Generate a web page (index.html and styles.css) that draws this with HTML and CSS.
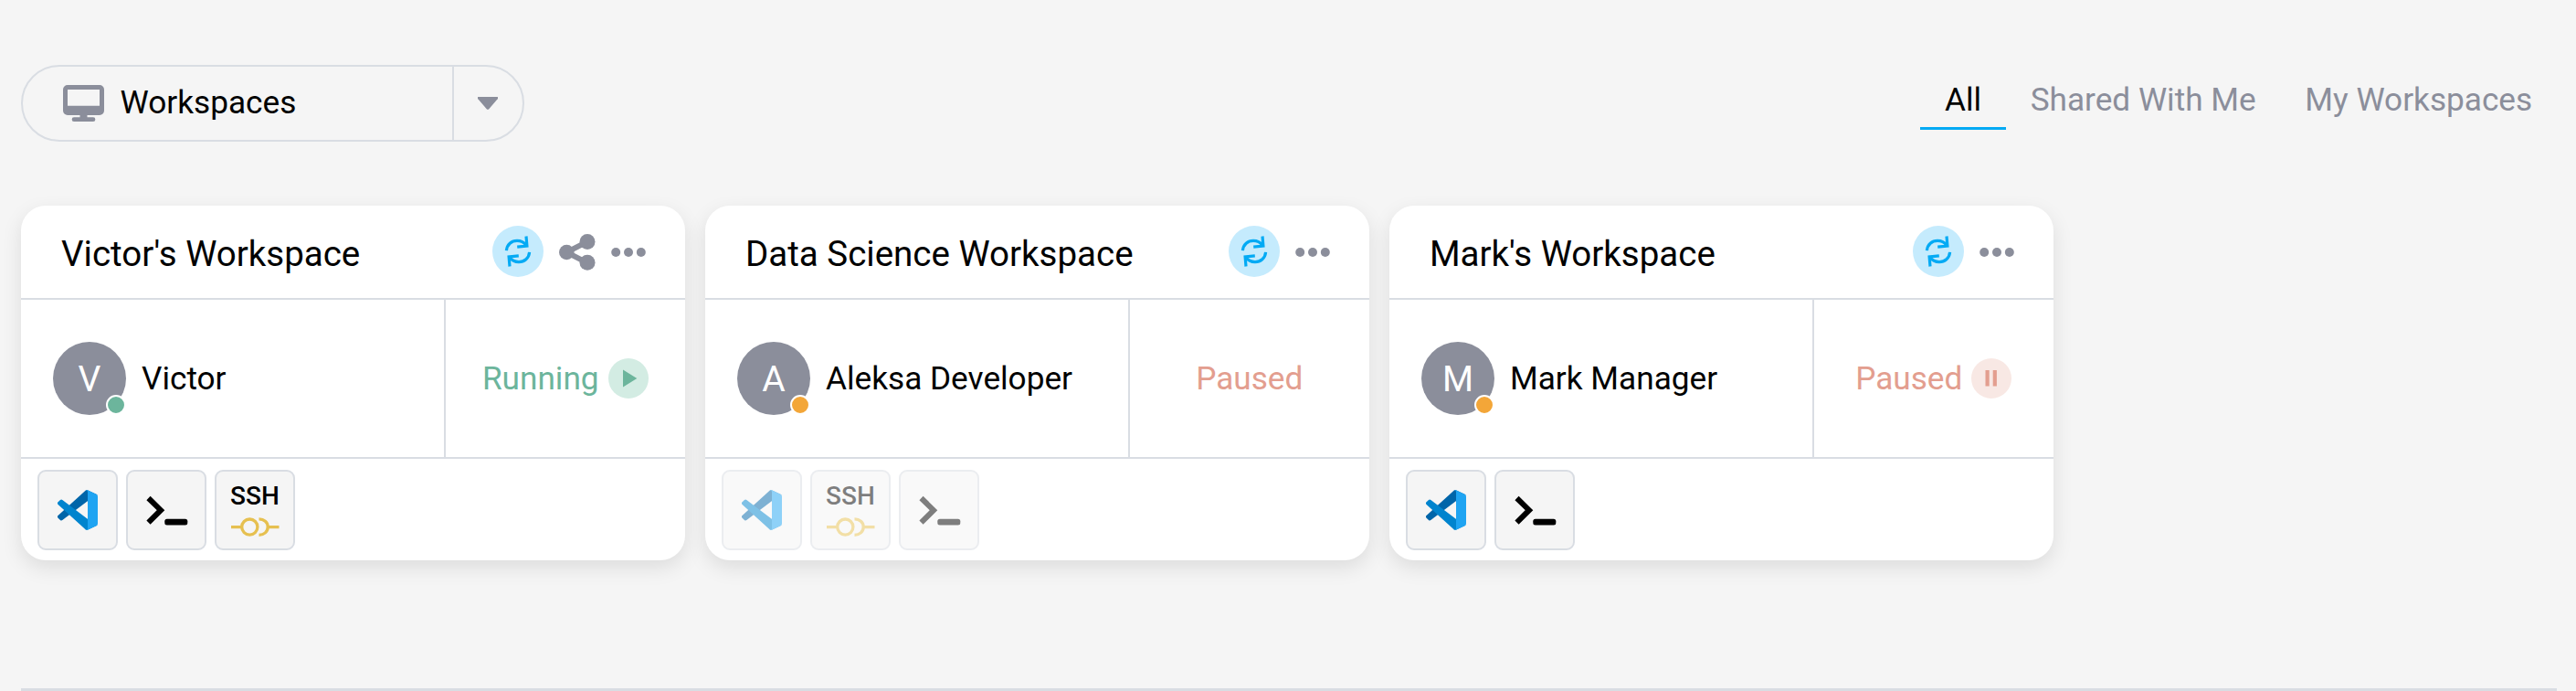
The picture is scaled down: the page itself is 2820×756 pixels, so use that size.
FILE: index.html
```
<!DOCTYPE html>
<html lang="en">
<head>
    <meta charset="UTF-8">
    <title>Workspaces</title>
    <link rel="stylesheet" href="styles.css">
</head>
<body>
    <!-- shared icons -->
    <svg class="sprite">
        <defs>
            <symbol id="icon-refresh" viewBox="-28 -28 56 56">
                <g fill="none" stroke="#03aaf4" stroke-width="3.2">
                    <path id="half" d="M-12.6 -0.8C-12 -7.5 -7 -11.6 -1 -11.6C3.500 -11.6 7 -9.500 9 -6.500M9 -16.500L9.900 -5.900L-0.800 -4.900"/>
                    <use href="#half" transform="rotate(180)"/>
                </g>
            </symbol>
            <symbol id="icon-share" viewBox="0 0 40 40">
                <path d="M31 8.300L8.300 20L31 31.700" fill="none" stroke="#8b8e9b" stroke-width="6"/>
                <circle cx="8.300" cy="20" r="8.300" fill="#8b8e9b"/>
                <circle cx="31" cy="8.600" r="8.500" fill="#8b8e9b"/>
                <circle cx="31" cy="31.200" r="8.500" fill="#8b8e9b"/>
            </symbol>
            <symbol id="icon-more" viewBox="0 0 38 12">
                <g fill="#8b8e9b">
                    <circle cx="5.200" cy="6" r="5"/>
                    <circle cx="19" cy="6" r="5"/>
                    <circle cx="32.800" cy="6" r="5"/>
                </g>
            </symbol>
            <symbol id="icon-vscode" viewBox="0 0 100 100">
                <path fill="#0065a9" d="M96.461 10.796L75.857.876A6.230 6.230 0 0 0 68.750 2.083L1.299 63.583a4.167 4.167 0 0 0 .004 6.162l5.510 5.009a4.167 4.167 0 0 0 5.321.237l81.227-61.621C96.086 11.303 100 13.246 100 16.667v-.24a6.250 6.250 0 0 0-3.539-5.631z"/>
                <path fill="#0084ce" d="M96.461 89.204L75.857 99.125a6.230 6.230 0 0 1-7.107-1.208L1.299 36.417a4.167 4.167 0 0 1 .004-6.162l5.510-5.009a4.167 4.167 0 0 1 5.321-.237l81.227 61.621C96.086 88.697 100 86.754 100 83.333v.24a6.250 6.250 0 0 1-3.539 5.631z"/>
                <path fill="#1fa4f2" d="M75.858 99.126a6.230 6.230 0 0 1-7.108-1.209C71.056 100.223 75 98.590 75 95.328V4.672C75 1.410 71.056-.223 68.750 2.083A6.230 6.230 0 0 1 75.858.874l20.601 9.907A6.250 6.250 0 0 1 100 16.413v67.174a6.250 6.250 0 0 1-3.541 5.633z"/>
            </symbol>
            <symbol id="icon-terminal" viewBox="0 0 88 88">
                <path d="M24.500 31L38 44.200L24.500 57.600" fill="none" stroke="#000" stroke-width="6" />
                <rect x="42.300" y="53.700" width="25" height="6.700" rx="2.500"/>
            </symbol>
            <symbol id="icon-ssh" viewBox="0 0 88 88">
                <text class="ssh-text" x="44" y="37.800" text-anchor="middle">SSH</text>
                <g fill="none" stroke="#e6c050" stroke-width="3.300">
                    <path d="M18 62.600H29M59 62.600H70.500"/>
                    <circle cx="38.300" cy="62.600" r="8.600"/>
                    <path d="M48.500 53.900C54 53.900 58.200 57.500 58.200 62.600C58.200 67.700 54 71.300 48.500 71.300"/>
                </g>
            </symbol>
        </defs>
    </svg>

    <div class="top-bar">
        <div class="page-select">
            <div class="page-name">
                <svg class="monitor" width="45" height="40" viewBox="0 0 45 40">
                    <path fill="#8b8e9b" fill-rule="evenodd" d="M5 0H40A5 5 0 0 1 45 5V28A5 5 0 0 1 40 33H26.500V35.300H33A2 2 0 0 1 33 40H12A2 2 0 0 1 12 35.300H18.500V33H5A5 5 0 0 1 0 28V5A5 5 0 0 1 5 0ZM5 5V22.700H40V5Z"/>
                </svg>
                <span>Workspaces</span>
            </div>
            <div class="page-arrow">
                <svg width="22" height="14" viewBox="0 0 22 14">
                    <path fill="#8b8e9b" d="M1.500 0H20.500A1.300 1.300 0 0 1 21.500 2.500L12.500 13A2 2 0 0 1 9.500 13L.5 2.500A1.300 1.300 0 0 1 1.500 0Z"/>
                </svg>
            </div>
        </div>
        <div class="tabs">
            <div class="tab active">All</div>
            <div class="tab">Shared With Me</div>
            <div class="tab">My Workspaces</div>
        </div>
    </div>

    <div class="cards">
        <div class="card">
            <div class="card-head">
                <div class="title">Victor's Workspace</div>
                <svg class="refresh"><use href="#icon-refresh"/></svg>
                <svg class="share"><use href="#icon-share"/></svg>
                <svg class="more"><use href="#icon-more"/></svg>
            </div>
            <div class="card-body">
                <div class="owner">
                    <div class="avatar">V<span class="dot green"></span></div>
                    <span class="label">Victor</span>
                </div>
                <div class="status running">
                    <span class="label">Running</span>
                    <svg class="state" viewBox="-22 -22 44 44"><path d="M-6 -9.500L9.300 0L-6 9.500Z"/></svg>
                </div>
            </div>
            <div class="apps">
                <div class="app"><svg class="vscode"><use href="#icon-vscode"/></svg></div>
                <div class="app"><svg class="full"><use href="#icon-terminal"/></svg></div>
                <div class="app"><svg class="full"><use href="#icon-ssh"/></svg></div>
            </div>
        </div>

        <div class="card">
            <div class="card-head">
                <div class="title">Data Science Workspace</div>
                <svg class="refresh"><use href="#icon-refresh"/></svg>
                <svg class="more"><use href="#icon-more"/></svg>
            </div>
            <div class="card-body">
                <div class="owner">
                    <div class="avatar">A<span class="dot orange"></span></div>
                    <span class="label">Aleksa Developer</span>
                </div>
                <div class="status paused">
                    <span class="label">Paused</span>
                </div>
            </div>
            <div class="apps">
                <div class="app disabled"><svg class="vscode"><use href="#icon-vscode"/></svg></div>
                <div class="app disabled"><svg class="full"><use href="#icon-ssh"/></svg></div>
                <div class="app disabled"><svg class="full"><use href="#icon-terminal"/></svg></div>
            </div>
        </div>

        <div class="card">
            <div class="card-head">
                <div class="title">Mark's Workspace</div>
                <svg class="refresh"><use href="#icon-refresh"/></svg>
                <svg class="more"><use href="#icon-more"/></svg>
            </div>
            <div class="card-body">
                <div class="owner">
                    <div class="avatar">M<span class="dot orange"></span></div>
                    <span class="label">Mark Manager</span>
                </div>
                <div class="status paused">
                    <span class="label">Paused</span>
                    <svg class="state" viewBox="-22 -22 44 44"><path d="M-6.500 -9H-2.300V8.500H-6.500ZM1.700 -9H5.900V8.500H1.700Z"/></svg>
                </div>
            </div>
            <div class="apps">
                <div class="app"><svg class="vscode"><use href="#icon-vscode"/></svg></div>
                <div class="app"><svg class="full"><use href="#icon-terminal"/></svg></div>
            </div>
        </div>
    </div>

    <div class="bottom-line"></div>
</body>
</html>
```
FILE: styles.css
```
* {
    box-sizing: border-box;
}
body {
    margin: 0;
    height: 756px;
    overflow: hidden;
    padding: 71px 21px 0 22.5px;
    background-color: #f5f5f5;
    font-family: Roboto, sans-serif;
    font-size: 35.2px;
    color: #000;
}
svg {
    display: block;
    flex: none;
}
.sprite {
    position: absolute;
    width: 0;
    height: 0;
}

/* top bar */
.top-bar {
    display: flex;
    justify-content: space-between;
    height: 84px;
}
.page-select {
    display: flex;
    width: 551px;
    border: 2px solid #d9dde3;
    border-radius: 42px;
}
.page-name {
    display: flex;
    align-items: center;
    width: 472px;
    padding-left: 44px;
    padding-bottom: 2px;
    border-right: 2px solid #d9dde3;
}
.monitor {
    margin-right: 18px;
    margin-top: 2px;
}
.page-arrow {
    flex: 1;
    display: flex;
    align-items: center;
    justify-content: center;
}
.tabs {
    display: flex;
    height: 71px;
}
.tab {
    padding: 0 26.8px;
    line-height: 77px;
    color: #8b8e9b;
}
.tab.active {
    color: #000;
    border-bottom: 3px solid #03aaf4;
}

/* cards */
.cards {
    display: flex;
    gap: 21.5px;
    margin-top: 70px;
}
.card {
    width: 727.5px;
    height: 388px;
    border-radius: 27px;
    background-color: #fff;
    box-shadow: 0 8px 22px rgba(0, 0, 0, 0.1);
}
.card-head {
    display: flex;
    align-items: center;
    height: 103px;
    padding: 0 43.5px 0 44.5px;
    border-bottom: 2px solid #d9dde3;
}
.title {
    flex: 1;
    font-size: 38.5px;
    padding-top: 3px;
}
.refresh {
    width: 56px;
    height: 56px;
    margin-bottom: 2px;
    border-radius: 50%;
    background-color: #c5ebfd;
}
.share {
    width: 40px;
    height: 40px;
    margin-left: 17px;
}
.more {
    width: 38px;
    height: 12px;
    margin-left: 17px;
}
.card-body {
    display: flex;
    height: 174px;
    border-bottom: 2px solid #d9dde3;
}
.owner {
    display: flex;
    align-items: center;
    width: 465px;
    padding-left: 35.5px;
    border-right: 2px solid #d9dde3;
}
.label {
    padding-bottom: 1px;
}
.avatar {
    position: relative;
    width: 80px;
    height: 80px;
    margin-right: 17px;
    border-radius: 50%;
    background-color: #8b8e9b;
    color: #fff;
    font-size: 39px;
    line-height: 83px;
    text-align: center;
}
.dot {
    position: absolute;
    right: 0;
    bottom: 0;
    width: 22px;
    height: 22px;
    border: 2px solid #fff;
    border-radius: 50%;
}
.dot.green {
    background-color: #6cb59c;
}
.dot.orange {
    background-color: #f3a638;
}
.status {
    flex: 1;
    display: flex;
    align-items: center;
    justify-content: center;
    gap: 10px;
}
.running {
    color: #6cb59c;
}
.paused {
    color: #e39e8f;
}
.state {
    width: 44px;
    height: 44px;
    border-radius: 50%;
    fill: currentColor;
}
.running .state {
    background-color: #d3ece3;
}
.paused .state {
    background-color: #f8e8e4;
}

/* app buttons */
.apps {
    display: flex;
    gap: 9px;
    padding: 12px 18px;
}
.app {
    display: flex;
    align-items: center;
    justify-content: center;
    width: 88px;
    height: 88px;
    border: 2px solid #d9dde3;
    border-radius: 9px;
    background-color: #f5f5f5;
}
.disabled {
    opacity: 0.5;
}
.vscode {
    width: 44px;
    height: 44px;
}
.full {
    width: 88px;
    height: 88px;
}
.ssh-text {
    font-size: 28px;
    font-weight: 500;
}

.bottom-line {
    margin-top: 140px;
    height: 3px;
    background-color: #d9dde3;
}
```
